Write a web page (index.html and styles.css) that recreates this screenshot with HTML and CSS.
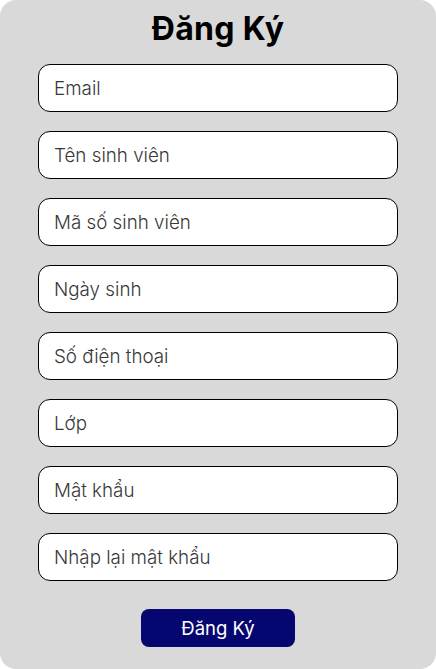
FILE: index.html
```html
<!DOCTYPE html>
<html lang="vi">
<head>
<meta charset="utf-8">
<title>Đăng Ký</title>
<link rel="stylesheet" href="styles.css">
</head>
<body>
<main class="panel">
  <h1 class="title">Đăng Ký</h1>
  <form class="form">
    <input class="field" type="email" placeholder="Email">
    <input class="field" type="text" placeholder="Tên sinh viên">
    <input class="field" type="text" placeholder="Mã số sinh viên">
    <input class="field" type="text" placeholder="Ngày sinh">
    <input class="field" type="text" placeholder="Số điện thoại">
    <input class="field" type="text" placeholder="Lớp">
    <input class="field" type="password" placeholder="Mật khẩu">
    <input class="field" type="password" placeholder="Nhập lại mật khẩu">
    <button class="submit" type="button">Đăng Ký</button>
  </form>
</main>
</body>
</html>
```

FILE: styles.css
```css
html, body {
  margin: 0;
  padding: 0;
  background: #ffffff;
}

body {
  font-family: Inter, "Noto Sans", sans-serif;
}

.panel {
  box-sizing: border-box;
  width: 436px;
  height: 669px;
  background: #d9d9d9;
  border-radius: 16px;
  padding-top: 9px;
  display: flex;
  flex-direction: column;
  align-items: center;
}

.title {
  margin: 0 0 16px;
  font-size: 32px;
  font-weight: 700;
  line-height: 39px;
  color: #000;
  letter-spacing: 0.3px;
}

.form {
  display: flex;
  flex-direction: column;
  align-items: center;
  gap: 19px;
}

.field {
  box-sizing: border-box;
  width: 360px;
  height: 48px;
  margin: 0;
  padding: 0 15px;
  border: 1px solid #000;
  border-radius: 12px;
  background: #fff;
  font-family: "Inter Light", Inter, "Noto Sans", sans-serif;
  font-size: 18.8px;
  font-weight: 300;
  color: #383838;
  outline: none;
}

.field::placeholder {
  color: #383838;
  opacity: 1;
}

.submit {
  box-sizing: border-box;
  width: 154px;
  height: 38px;
  margin-top: 9px;
  border: none;
  border-radius: 8px;
  background: #060670;
  color: #fff;
  font-family: Inter, "Noto Sans", sans-serif;
  font-size: 18.5px;
  font-weight: 400;
  cursor: pointer;
}
```
